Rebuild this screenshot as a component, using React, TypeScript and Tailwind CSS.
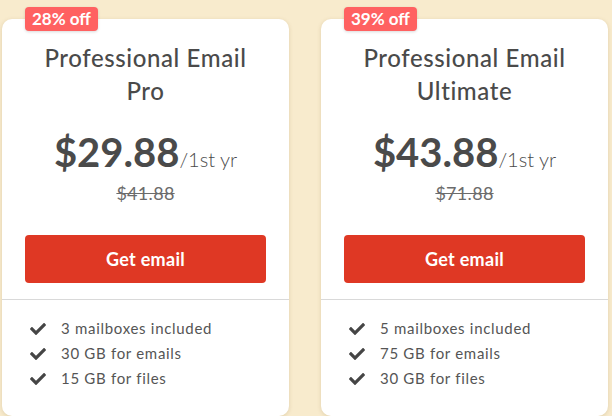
import { FaCheck } from "react-icons/fa";

type Plan = {
  badge: string;
  title: string[];
  price: string;
  oldPrice: string;
  features: string[];
};

const plans: Plan[] = [
  {
    badge: "28% off",
    title: ["Professional Email", "Pro"],
    price: "$29.88",
    oldPrice: "$41.88",
    features: ["3 mailboxes included", "30 GB for emails", "15 GB for files"],
  },
  {
    badge: "39% off",
    title: ["Professional Email", "Ultimate"],
    price: "$43.88",
    oldPrice: "$71.88",
    features: ["5 mailboxes included", "75 GB for emails", "30 GB for files"],
  },
];

const PlanCard = ({ plan }: { plan: Plan }) => {
  return (
    <div className="relative w-[287px] rounded-[10px] bg-white shadow-[0_1px_4px_rgba(120,90,30,0.18)]">
      {/* discount badge sits over the card edge */}
      <div className="absolute left-[23px] top-[-12px] rounded-[4px] bg-[#ff6161] px-[7px] text-[17px] font-bold leading-[24px] text-white shadow-[0_1px_3px_rgba(0,0,0,0.15)]">
        {plan.badge}
      </div>
      <div className="flex flex-col items-center px-[23px] pt-[22px]">
        <h2 className="text-center text-[24px] font-medium leading-[33px] tracking-[0.6px] text-[#4a4a4a]">
          {plan.title[0]}
          <br />
          {plan.title[1]}
        </h2>
        <div className="mt-[21px] flex items-baseline leading-[48px] text-[#4a4a4a]">
          <span className="text-[40px] font-bold">{plan.price}</span>
          <span className="text-[20px] font-light">/1st yr</span>
        </div>
        <div className="mt-[-2px] text-[18px] leading-[24px] tracking-[0.3px] text-[#6b6b6b] line-through">
          {plan.oldPrice}
        </div>
        <button className="mt-[30px] h-[48px] w-full rounded-[4px] bg-[#df3824] text-[18px] font-bold tracking-[0.3px] text-white">
          Get email
        </button>
      </div>
      <div className="mt-[16px] border-t border-[#d9d9d9] px-[28px] pb-[30px] pt-[16px]">
        <ul>
          {plan.features.map((f, i) => (
            <li key={i} className="flex items-center gap-[15px] text-[15px] leading-[25px] tracking-[0.7px] text-[#555]">
              <FaCheck className="h-[16px] w-[16px] text-[#454545]" />
              <span>{f}</span>
            </li>
          ))}
        </ul>
      </div>
    </div>
  );
};

export default function App() {
  return (
    <div className="flex h-[416px] w-[612px] gap-[32px] bg-[#f8ebcd] pl-[2px] pt-[19px] font-['Lato',sans-serif]">
      {plans.map((p, i) => (
        <PlanCard key={i} plan={p} />
      ))}
    </div>
  );
}
